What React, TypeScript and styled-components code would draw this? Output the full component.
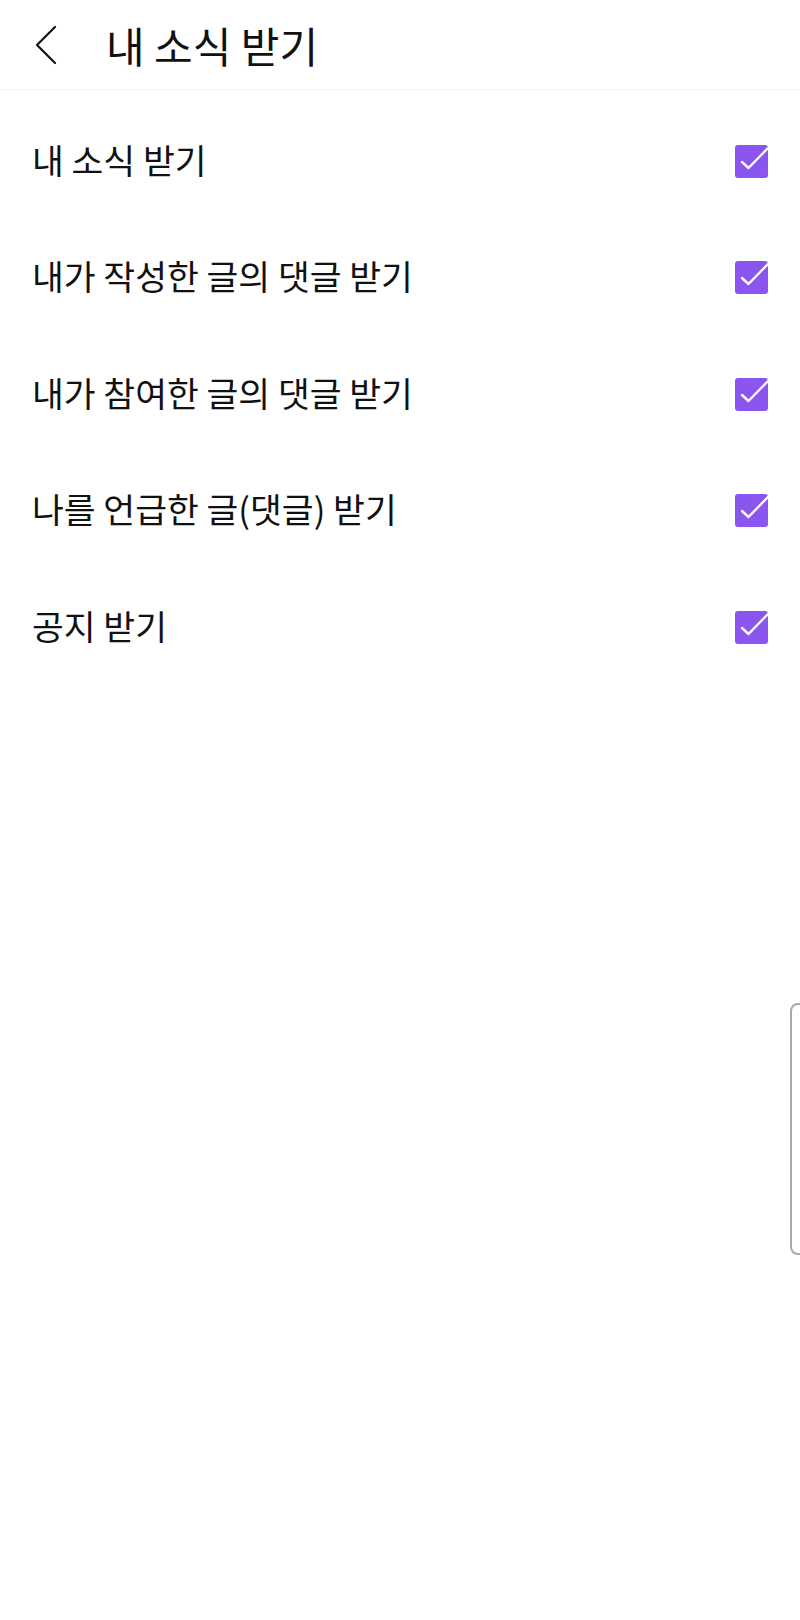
import React, { FC, useState } from 'react';
import styled, { createGlobalStyle } from 'styled-components';

const GlobalStyle = createGlobalStyle`
  html, body {
    margin: 0;
    padding: 0;
    background: #ffffff;
  }
  body {
    font-family: 'Noto Sans CJK KR', 'Noto Sans', sans-serif;
    color: #111111;
  }
`;

const Page = styled.div`
  position: relative;
  width: 800px;
  height: 1620px;
  background: #ffffff;
  overflow: hidden;
`;

const Header = styled.div`
  display: flex;
  align-items: center;
  height: 90px;
  border-bottom: 1px solid #f0f0f0;
  box-sizing: border-box;
`;

const BackButton = styled.button`
  display: flex;
  align-items: center;
  justify-content: center;
  width: 60px;
  height: 60px;
  margin-left: 16px;
  padding: 0;
  border: none;
  background: transparent;
`;

const Title = styled.h1`
  margin: 0 0 0 30px;
  font-size: 42px;
  font-weight: 400;
  line-height: 1;
  color: #111111;
`;

const List = styled.div`
  display: flex;
  flex-direction: column;
  padding-top: 13px;
`;

const Row = styled.label`
  display: flex;
  align-items: center;
  justify-content: space-between;
  height: 116.5px;
  padding: 0 32px;
`;

const RowLabel = styled.span`
  font-size: 34.6px;
  font-weight: 400;
  line-height: 1;
  color: #111111;
  padding-bottom: 4px;
`;

const Box = styled.span<{ $checked: boolean }>`
  display: flex;
  align-items: center;
  justify-content: center;
  width: 33px;
  height: 33px;
  border-radius: 3px;
  background: ${({ $checked }) => ($checked ? '#8b55f0' : '#ffffff')};
  border: ${({ $checked }) => ($checked ? 'none' : '2px solid #999')};
  box-sizing: border-box;
`;

const EdgeHandle = styled.div`
  position: absolute;
  right: -12px;
  top: 1003px;
  width: 22px;
  height: 252px;
  border: 2px solid #a9a9a9;
  border-radius: 8px;
  box-sizing: border-box;
`;

const items = [
  '내 소식 받기',
  '내가 작성한 글의 댓글 받기',
  '내가 참여한 글의 댓글 받기',
  '나를 언급한 글(댓글) 받기',
  '공지 받기',
];

const App: FC = () => {
  const [checked, setChecked] = useState<boolean[]>(items.map(() => true));

  const toggle = (index: number) => {
    setChecked(prev => prev.map((v, i) => (i === index ? !v : v)));
  };

  return (
    <Page>
      <GlobalStyle />
      <Header>
        <BackButton aria-label="back">
          <svg width="24" height="40" viewBox="0 0 24 40" fill="none">
            <path d="M21 2 L3 20 L21 38" stroke="#111" strokeWidth="2.2" strokeLinecap="round" strokeLinejoin="round" />
          </svg>
        </BackButton>
        <Title>내 소식 받기</Title>
      </Header>
      <List>
        {items.map((label, i) => (
          <Row key={label} onClick={() => toggle(i)}>
            <RowLabel>{label}</RowLabel>
            <Box $checked={checked[i]}>
              {checked[i] && (
                <svg width="33" height="33" viewBox="0 0 33 33" fill="none">
                  <path d="M7 17 L13.5 23 L33 3" stroke="#fff" strokeWidth="2.4" strokeLinecap="round" strokeLinejoin="round" />
                </svg>
              )}
            </Box>
          </Row>
        ))}
      </List>
      <EdgeHandle />
    </Page>
  );
};

export default App;
